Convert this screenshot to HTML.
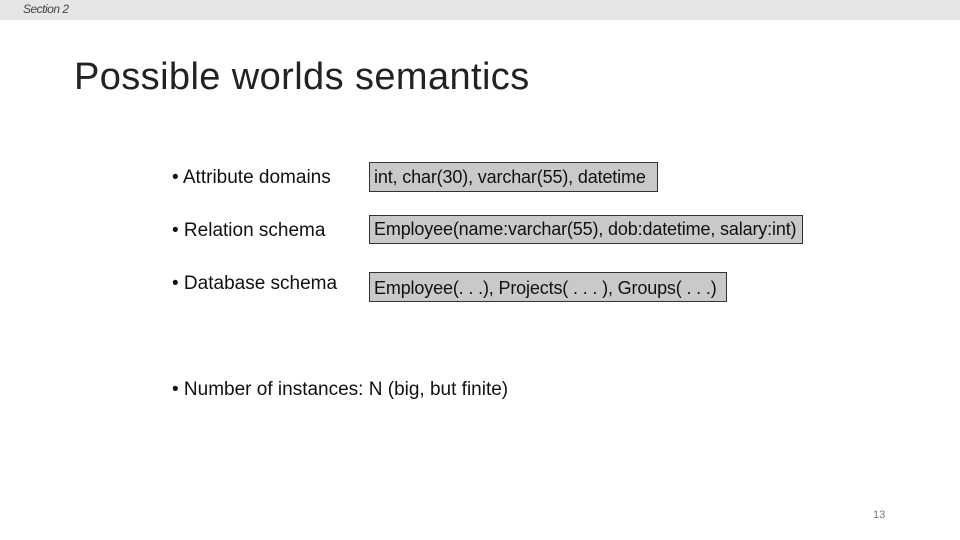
<!DOCTYPE html>
<html><head><meta charset="utf-8"><style>
body{margin:0;width:960px;height:540px;background:#fff;position:relative;overflow:hidden;font-family:"Liberation Sans",Arial,sans-serif}
.hdr{position:absolute;left:0;top:0;width:960px;height:20px;background:#e6e6e6}
.hdr span{position:absolute;left:23px;top:2px;font-size:12px;font-style:italic;color:#444;letter-spacing:-0.5px}
h1{position:absolute;left:74px;top:56px;margin:0;font-weight:normal;font-size:38px;color:#222;letter-spacing:0.4px}
.t{position:absolute;font-size:19px;color:#111;white-space:nowrap}
.b{position:absolute;background:#c9c9c9;border:1.5px solid #333;box-sizing:border-box;font-size:18px;color:#111;white-space:nowrap;padding-left:4px;letter-spacing:-0.15px}
.pg{position:absolute;left:873px;top:509px;font-size:11px;color:#777}
</style></head><body>
<div class="hdr"><span>Section 2</span></div>
<h1>Possible worlds semantics</h1>
<div class="t" style="left:172px;top:167px">• Attribute domains</div>
<div class="b" style="left:369px;top:162px;width:289px;height:30px;line-height:28px">int, char(30), varchar(55), datetime</div>
<div class="t" style="left:172px;top:220px">• Relation schema</div>
<div class="b" style="left:369px;top:215px;width:434px;height:29px;line-height:27px">Employee(name:varchar(55), dob:datetime, salary:int)</div>
<div class="t" style="left:172px;top:273px">• Database schema</div>
<div class="b" style="left:369px;top:272px;width:358px;height:30px;line-height:30px">Employee(. . .), Projects( . . . ), Groups( . . .)</div>
<div class="t" style="left:172px;top:379px">• Number of instances: N (big, but finite)</div>
<div class="pg">13</div>
</body></html>
